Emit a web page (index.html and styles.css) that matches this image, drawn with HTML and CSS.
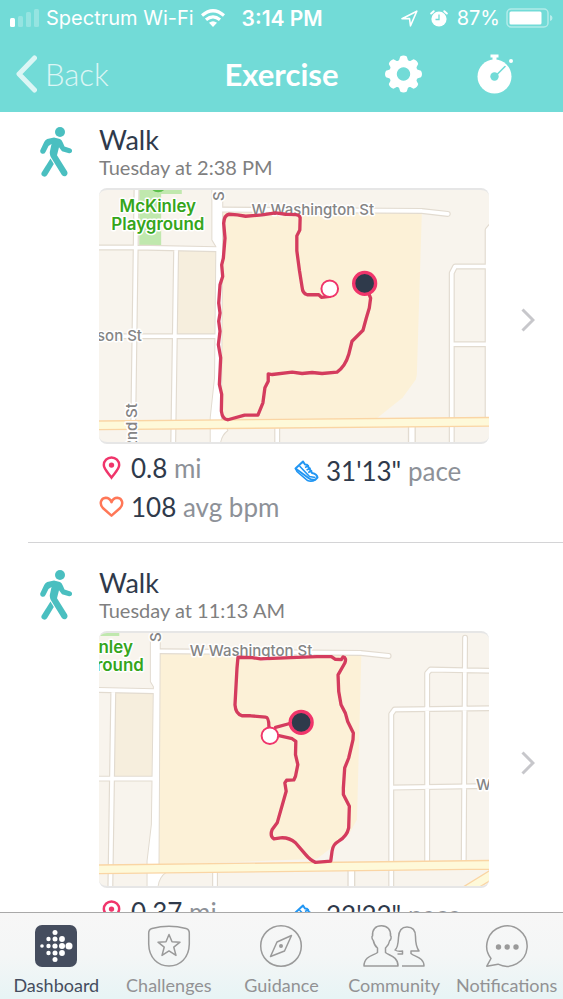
FILE: index.html
```
<!DOCTYPE html>
<html lang="en"><head>

<meta charset="utf-8" />
<meta name="viewport" content="width=device-width, initial-scale=1" />
<title>Exercise</title>

<link rel="stylesheet" href="styles.css">

</head><body>

<!-- shared icons -->
<svg class="defs" aria-hidden="true">
	<symbol id="walk" viewBox="0 0 32 50">
		<circle cx="20" cy="5" r="5" />
		<path d="M14 10.500l6 1.500q2 1 3 4l1.500 3.500 6 2q2 1 1.500 3t-3 1.700l-7-2-3-4-2 8 10 16q1.400 3-.8 4.500t-4.300-.7L12 32q-3-4-2-8l1.500-7-3 2-3 6q-1.200 2.400-3.500 1.700T.3 23.300L4.200 15q1-2 3-3z" />
		<path d="M10.500 31.500l3.300 5.500L7 48.300q-1.500 2.200-4 1t-1.300-3.800z" />
	</symbol>
	<symbol id="pin" viewBox="0 0 20 25">
		<path fill="none" stroke="#f0356b" stroke-width="2.600" d="M10 22.500C6 17 2 13.500 2 9.500a8 8 0 0 1 16 0C18 13.500 14 17 10 22.500z" />
		<circle cx="10" cy="9.500" r="2.800" fill="#f0356b" />
	</symbol>
	<symbol id="shoe" viewBox="0 0 25 23">
		<path fill="none" stroke="#2196f3" stroke-width="2" stroke-linejoin="round" d="M1.500 9L9 2l2 3 2 .2 5 8.300q5 1 5.500 4.500l-2 2q-4 .8-7-1.500z" />
		<path fill="none" stroke="#2196f3" stroke-width="1.600" d="M1.500 9L3 12l10.500 9q4 1.500 8-.8M5.500 6.500L15.500 17l6 1M11 8l4-2M12.600 10.500l4-2M14.200 13l4-2" />
	</symbol>
	<symbol id="heart" viewBox="0 0 26 23">
		<path fill="none" stroke="#ff7757" stroke-width="2.600" stroke-linejoin="round" d="M13 20.500L4 12.500C0 8 2 2.500 7 2q4 0 6 4.500Q15 2 19 2c5 .5 7 6 3 10.500z" />
	</symbol>
	<symbol id="more" viewBox="0 0 14 24">
		<path fill="none" stroke="#c7c7cb" stroke-width="3" d="M1.500 1.500L12 12 1.500 22.500" />
	</symbol>
</svg>

<header class="top">
	<div class="status">
		<svg class="bars" viewBox="0 0 29 18" fill="#fff">
			<rect y="9" width="5" height="9" rx="1.500" />
			<g opacity=".25">
				<rect x="8" y="7" width="5" height="11" rx="1.500" />
				<rect x="16" y="3" width="5" height="15" rx="1.500" />
				<rect x="24" width="5" height="18" rx="1.500" />
			</g>
		</svg>
		<span class="carrier">Spectrum Wi-Fi</span>
		<svg class="wifi" viewBox="0 0 24 18" fill="none" stroke="#fff" stroke-width="3.200">
			<path d="M1 6.500q11-9.500 22 0M5 10.800q7-6 14 0" />
			<path fill="#fff" stroke="none" d="M12 18l-4-4.200q4-3.200 8 0z" />
		</svg>
		<span class="time">3:14 PM</span>
		<svg class="arrow" viewBox="0 0 17 17" fill="none" stroke="#fff" stroke-width="1.600" stroke-linejoin="round">
			<path d="M1 8.800L15.800 1.200 9.500 15.800 8.500 8.500z" />
		</svg>
		<svg class="alarm" viewBox="0 0 18 17">
			<circle cx="9" cy="9" r="7.600" fill="#fff" />
			<path fill="none" stroke="#fff" stroke-width="2" stroke-linecap="round" d="M1.200 3.500l2.500-2.300M16.800 3.500l-2.500-2.300" />
			<path fill="none" stroke="#72dbd7" stroke-width="1.300" d="M9 4.500V9.500H5.500" />
		</svg>
		<span class="percent">87%</span>
		<svg class="battery" viewBox="0 0 47 20">
			<rect x="1" y="1" width="41" height="18" rx="4" fill="none" stroke="#fff" stroke-opacity=".45" stroke-width="1.500" />
			<rect x="3.500" y="3.500" width="32" height="13" rx="1.500" fill="#fff" />
			<path fill="#fff" fill-opacity=".5" d="M44 7q2.500.5 2.500 3T44 13z" />
		</svg>
	</div>
	<nav class="bar">
		<button type="button" class="back">
			<svg viewBox="0 0 21 38"><path fill="none" stroke="#fff" stroke-width="5" stroke-linecap="round" stroke-linejoin="round" d="M18.500 3L3 19l15.500 16" /></svg>
			Back
		</button>
		<h1>Exercise</h1>
		<div class="actions">
			<button type="button" aria-label="Settings">
				<svg viewBox="-18.500 -18.500 37 37" fill="#fff">
					<path id="teeth" d="M-3.300-17.500q3.300-2 6.600 0L5-12H-5zM-3.300 17.500q3.300 2 6.600 0L5 12H-5zM-17.500-3.300q-2 3.300 0 6.600L-12 5V-5zM17.500-3.300q2 3.300 0 6.600L12 5V-5z" />
					<use href="#teeth" transform="rotate(45)" />
					<path fill-rule="evenodd" d="M0-14.500a14.500 14.500 0 1 0 .01 0zM0-6.700a6.700 6.700 0 1 1-.01 0z" />
				</svg>
			</button>
			<button type="button" aria-label="Start timer">
				<svg viewBox="0 0 37 40">
					<circle cx="17.500" cy="22.500" r="17" fill="#fff" />
					<path fill="#fff" d="M13.500.5h8v3h-2V7h-4V3.500h-2z" />
					<circle cx="34" cy="7" r="2" fill="#fff" />
					<path fill="none" stroke="#72dbd7" stroke-width="1.600" stroke-linecap="round" d="M18 22.500l10-10" />
					<circle cx="17.500" cy="22.500" r="4.200" fill="#72dbd7" />
				</svg>
			</button>
		</div>
	</nav>
</header>

<main class="list">
	<a class="entry" href="#walk-1">
		<svg class="kind"><use href="#walk" /></svg>
		<div class="body">
			<h2>Walk</h2>
			<p class="when">Tuesday at 2:38 PM</p>
			<svg class="map" viewBox="0 2 391 253">
				<g transform="translate(-3 -3) scale(.33333)">
					<path class="park" d="M130 0H258V27H196V183H130z" />
					<circle cx="187" cy="-4" r="26" fill="#5cc14c" />
					<path class="block" d="M245 195H362V455H245z" />
					<path class="campus" d="M378 82L980 84 965 570 962 585 922 640 840 705 378 715z" />
					<g class="casing">
						<path d="M122 0L112 715 110 790M241 195L232 790M0 188L120 188 362 193M0 455H362M1070 790V265L1080 245H1200M1178 715V135L1195 115M1070 479L1200 478M380 74L980 78 1058 87M545 730V790" />
						<path class="wide" d="M950 718V790" />
						<path class="shape" d="M350 0V165L362 185 358 580 345 700V790H372Q372 755 395 738L376 710 380 0z" />
					</g>
					<g class="road">
						<path d="M122 0L112 715 110 790M241 195L232 790M0 188L120 188 362 193M0 455H362M1070 790V265L1080 245H1200M1178 715V135L1195 115M1070 479L1200 478M380 74L980 78 1058 87M545 730V790" />
						<path class="wide" d="M950 718V790" />
						<path class="shape" d="M350 0V165L362 185 358 580 345 700V790H372Q372 755 395 738L376 710 380 0z" />
					</g>
					<path class="main-casing" d="M0 723L1200 712" />
					<path class="main-road" d="M0 723L1200 712" />
				</g>
				<g class="street">
					<text x="153" y="27">W Washington St</text>
					<text x="43" y="153" text-anchor="end">son St</text>
					<text transform="translate(38 262) rotate(-90)">2nd St</text>
					<text transform="translate(125 13) rotate(-90)">S</text>
				</g>
				<g class="place">
					<text x="59" y="24" text-anchor="middle">McKinley</text>
					<text x="59" y="42" text-anchor="middle">Playground</text>
				</g>
				<g transform="translate(-3 -3) scale(.33333)">
					<path class="route" d="M703 335L678 338 670 330H635Q621 326 620 308L612 258 604 198V153L613 135 614 98Q612 90 600 89L570 88 540 84 500 90 450 94 425 90 400 88Q386 90 384 115L388 160 383 220 378 240 381 275 373 300 369 355 373 385 369 410 373 440 368 480 375 520 371 600 378 630 377 680Q380 705 397 706L447 692H487L502 655 508 610 518 590V568L530 570 590 563 620 567 650 564 680 567 725 563Q750 545 760 510L770 470 803 437 813 400 822 370 826 340 808 296" />
					<circle class="start" cx="703" cy="312" r="25" />
					<circle class="finish" cx="808" cy="296" r="33" />
				</g>
			</svg>
			<ul class="stats">
				<li><svg><use href="#pin" /></svg><span><b>0.8</b> mi</span></li>
				<li class="pace"><svg><use href="#shoe" /></svg><span><b>31'13"</b> pace</span></li>
				<li><svg><use href="#heart" /></svg><span><b>108</b> avg bpm</span></li>
			</ul>
		</div>
		<svg class="more"><use href="#more" /></svg>
	</a>

	<a class="entry" href="#walk-2">
		<svg class="kind"><use href="#walk" /></svg>
		<div class="body">
			<h2>Walk</h2>
			<p class="when">Tuesday at 11:13 AM</p>
			<svg class="map" viewBox="0 2 391 253">
				<g transform="translate(-3 -6) scale(.33333)">
					<path class="park" d="M0 0H70V33H0z" />
					<path class="block" d="M55 200H174V460H55z" />
					<path class="campus" d="M188 86L798 90 785 585 760 630 665 703 188 722z" />
					<g class="casing">
						<path d="M52 200L43 800M0 195L175 199M0 462H175M888 800V268L898 254 1200 250M996 715V145L1006 134 1200 138M1106 715L1110 38M888 489L1200 484M190 79L797 84 880 93M358 740V800" />
						<path class="wide" d="M768 730V800" />
						<path class="shape" d="M165 0V170L174 185 168 600 155 710V800H184Q185 760 210 743L188 720 192 0z" />
					</g>
					<g class="road">
						<path d="M52 200L43 800M0 195L175 199M0 462H175M888 800V268L898 254 1200 250M996 715V145L1006 134 1200 138M1106 715L1110 38M888 489L1200 484M190 79L797 84 880 93M358 740V800" />
						<path class="wide" d="M768 730V800" />
						<path class="shape" d="M165 0V170L174 185 168 600 155 710V800H184Q185 760 210 743L188 720 192 0z" />
					</g>
					<path class="main-casing" d="M0 735L1200 721M1090 812L1210 738" />
					<path class="main-road" d="M0 735L1200 721M1090 812L1210 738" />
				</g>
				<g class="street">
					<text x="91" y="25">W Washington St</text>
					<text x="378" y="159">W</text>
					<text transform="translate(62 11) rotate(-90)">S</text>
				</g>
				<g class="place">
					<text x="34" y="22" text-anchor="end">McKinley</text>
					<text x="45" y="40" text-anchor="end">Playground</text>
				</g>
				<g transform="translate(-3 -6) scale(.33333)">
					<path class="route" d="M617 293L580 297 540 308M523 333L520 305Q520 278 510 277L465 273H440Q420 268 418 240L424 130 427 97 470 98 495 102 585 98 665 95H708L720 103 738 104 743 96Q755 98 748 115L728 150 730 200 737 240 750 265 757 290 774 325 773 345 760 400 748 430 744 490V510L762 545 760 610Q755 635 730 650 712 660 710 680L706 710 660 714Q645 708 630 690L600 655Q580 638 555 640L535 643Q522 635 530 615L545 595 572 500 568 475 573 467 595 466 600 455 607 420 600 390 601 350 590 342 550 333" />
					<circle class="start" cx="523" cy="333" r="25" />
					<circle class="finish" cx="617" cy="293" r="33" />
				</g>
			</svg>
			<ul class="stats">
				<li><svg><use href="#pin" /></svg><span><b>0.37</b> mi</span></li>
				<li class="pace"><svg><use href="#shoe" /></svg><span><b>22'22"</b> pace</span></li>
			</ul>
		</div>
		<svg class="more"><use href="#more" /></svg>
	</a>
</main>

<nav class="tabs">
	<a class="current" href="#dashboard">
		<svg viewBox="0 0 42 42">
			<rect width="42" height="42" rx="7" fill="#454d5e" />
			<g fill="#fff">
				<circle cx="7" cy="21" r="1.800" />
				<circle cx="13.500" cy="14" r="2.200" /><circle cx="13.500" cy="21" r="2.200" /><circle cx="13.500" cy="28" r="2.200" />
				<circle cx="20" cy="7.500" r="2.500" /><circle cx="20" cy="14" r="2.500" /><circle cx="20" cy="21" r="2.600" /><circle cx="20" cy="28" r="2.500" /><circle cx="20" cy="34.500" r="2.500" />
				<circle cx="27" cy="14" r="2.900" /><circle cx="27" cy="21" r="3" /><circle cx="27" cy="28" r="2.900" />
				<circle cx="34" cy="21" r="3.500" />
			</g>
		</svg>
		Dashboard
	</a>
	<a href="#challenges">
		<svg viewBox="0 0 42 42">
			<path d="M4 3.500Q21-.8 38 3.500 41.500 4.500 41.300 8.500V19C41 33 32 41 21 41S1 33 .7 19V8.500Q.5 4.500 4 3.500z" />
			<path d="M21 9.500l3 7.300 8 .4-6.200 5 2.200 8.200-7-4.500-7 4.500 2.200-8.200-6.200-5 8-.4z" />
		</svg>
		Challenges
	</a>
	<a href="#guidance">
		<svg viewBox="0 0 42 42">
			<circle cx="21" cy="21" r="20.300" />
			<path d="M31.500 10.500L24.500 26 10.500 31.500 17 17z" />
			<circle class="dot" cx="21" cy="21" r="2" />
		</svg>
		Guidance
	</a>
	<a href="#community">
		<svg class="people" viewBox="0 0 62 42">
			<path d="M18.500.8c6 0 9.500 4 9 10 1.200.5.600 4-.8 4.700-.6 4-2 5.500-4.200 7.500V27.500c3 3 12.500 3.500 12.500 13.500H1c0-10 10-10.500 13.500-13.500V23c-2.500-2-3.500-3.500-4.200-7.500C9 14.500 8.400 11.300 9.600 10.800 9 4.500 12.500.8 18.500.8z" />
			<path d="M39 41H61c0-9-9.500-9-13-12.500V26h8q-3.500-5-3.500-14.500T44 2q-8 0-8.500 10.500T32 25q3 2 7.500 1v3h-5" />
		</svg>
		Community
	</a>
	<a href="#notifications">
		<svg viewBox="0 0 42 42">
			<path d="M5 33.500A20.200 20.200 0 1 1 12 39.200L.8 41.200z" />
			<g class="dot"><circle cx="12.500" cy="22" r="2.700" /><circle cx="21.200" cy="22" r="2.700" /><circle cx="30" cy="22" r="2.700" /></g>
		</svg>
		Notifications
	</a>
</nav>

</body></html>
```
FILE: styles.css
```
:root {
	--teal      : #72dbd7;
	--walk      : #4abfc0;
	--ink       : #2f3a4b;
	--grey      : #8d9198;
	--line      : #d4d4d6;
}
* {
	box-sizing : border-box;
}
body {
	display        : flex;
	flex-direction : column;
	height         : 100vh;
	margin         : 0;
	background     : #fff;
	color          : var(--ink);
	font-family    : Lato, sans-serif;
}
a {
	color           : inherit;
	text-decoration : none;
}
button {
	padding    : 0;
	border     : 0;
	background : none;
	color      : inherit;
	font       : inherit;
}
button svg {
	display : block;
}
.defs {
	position : absolute;
	width    : 0;
	height   : 0;
}

/* header */
.top {
	flex-shrink : 0;
	background  : var(--teal);
	color       : #fff;
}
.status {
	display     : flex;
	align-items : center;
	height      : 36px;
	padding     : 0 10px;
	font-family : Inter, sans-serif;
	font-size   : 20px;
}
.bars    { width : 29px; height : 18px; margin-right : 7px; }
.wifi    { width : 24px; height : 18px; margin-left : 7px; }
.arrow   { width : 17px; height : 17px; margin-left : auto; }
.alarm   { width : 18px; height : 17px; margin-left : 12px; }
.battery { width : 47px; height : 20px; margin-left : 6px; }
.time {
	margin-left : 17px;
	font-size   : 21px;
	font-weight : 600;
}
.percent {
	margin-left : 9px;
}
.bar {
	display               : grid;
	grid-template-columns : 1fr auto 1fr;
	align-items           : center;
	height                : 76px;
	padding               : 0 16px;
}
.back {
	display      : flex;
	align-items  : center;
	gap          : 8px;
	justify-self : start;
	font-size    : 31px;
	font-weight  : 300;
	line-height  : 38px;
	opacity      : .75;
}
.back svg {
	width  : 21px;
	height : 38px;
}
.bar h1 {
	margin      : 0;
	font-size   : 31px;
	font-weight : 700;
	line-height : 38px;
}
.actions {
	display      : flex;
	align-items  : center;
	gap          : 55px;
	padding-left : 47px;
}
.actions svg {
	width  : 37px;
	height : 40px;
}

/* exercise list */
.list {
	flex       : 1;
	min-height : 0;
	overflow   : hidden;
}
.entry {
	display       : flex;
	margin-left   : 28px;
	padding       : 24px 28px 17px 12px;
	border-bottom : 1px solid var(--line);
}
.entry:first-child {
	padding-top : 12px;
}
.kind {
	flex-shrink : 0;
	width       : 32px;
	height      : 50px;
	margin      : 3px 27px 0 0;
	fill        : var(--walk);
}
.body {
	flex      : 1;
	min-width : 0;
}
.body h2 {
	margin      : 0;
	font-size   : 27px;
	font-weight : 400;
	line-height : 31px;
}
.when {
	margin      : 0 0 9px;
	color       : #808080;
	font-size   : 20px;
	line-height : 24px;
}
.more {
	flex-shrink : 0;
	width       : 14px;
	height      : 24px;
	margin      : 184px 0 0 32px;
}

/* map */
.map {
	display       : block;
	width         : 100%;
	border-top    : 2px solid #e6e6e6;
	border-bottom : 2px solid #e6e6e6;
	border-radius : 8px;
	background    : #f8f4ed;
}
.park   { fill : #c0e8ae; }
.block  { fill : #f6eedd; }
.campus { fill : #fcf1d7; }
.casing {
	fill            : none;
	stroke          : #e2dbd0;
	stroke-width    : 18;
	stroke-linecap  : round;
	stroke-linejoin : round;
}
.casing .wide  { stroke-width : 24; }
.casing .shape { stroke-width : 6; }
.road {
	fill            : none;
	stroke          : #fff;
	stroke-width    : 11;
	stroke-linecap  : round;
	stroke-linejoin : round;
}
.road .wide  { stroke-width : 16; }
.road .shape { fill : #fff; stroke : none; }
.main-casing { fill : none; stroke : #fad5a4; stroke-width : 30; }
.main-road   { fill : none; stroke : #fef9d9; stroke-width : 22; }
.map text {
	font-family     : Inter, sans-serif;
	paint-order     : stroke;
	stroke          : #fff;
	stroke-width    : 3px;
	stroke-linejoin : round;
}
.street {
	fill        : #858585;
	font-size   : 15px;
	font-weight : 500;
}
.place {
	fill        : #35a51b;
	font-size   : 17px;
	font-weight : 600;
}
.route {
	fill            : none;
	stroke          : #d43c5e;
	stroke-width    : 10;
	stroke-linecap  : round;
	stroke-linejoin : round;
}
.start  { fill : #fff; stroke : #f0356b; stroke-width : 6; }
.finish { fill : #2f3a4b; stroke : #f0356b; stroke-width : 10; }

/* distance, pace, pulse */
.stats {
	display               : grid;
	grid-template-columns : 1fr 1fr;
	margin                : 3px 0 0;
	padding               : 0;
	color                 : var(--grey);
	font-size             : 26px;
	line-height           : 36px;
	list-style            : none;
	white-space           : nowrap;
}
.stats li {
	display     : flex;
	align-items : center;
	gap         : 7px;
}
.stats svg {
	width  : 25px;
	height : 24px;
}
.stats b {
	color       : var(--ink);
	font-weight : 400;
}
.stats .pace {
	padding-top : 6px;
}

/* tab bar */
.tabs {
	display               : grid;
	grid-template-columns : repeat(5, 1fr);
	flex-shrink           : 0;
	height                : 87px;
	padding-top           : 12px;
	border-top            : 1px solid #a9a9a9;
	background            : linear-gradient(#f7f7f7, #f4f6f6 50%, #e7f4f5);
	color                 : #929294;
	font-size             : 18px;
	line-height           : 24px;
}
.tabs a {
	display        : flex;
	flex-direction : column;
	align-items    : center;
	gap            : 6px;
}
.tabs .current {
	color : #454d5e;
}
.tabs svg {
	width           : 42px;
	height          : 42px;
	overflow        : visible;
	fill            : none;
	stroke          : #9a9a9a;
	stroke-width    : 1.5px;
	stroke-linejoin : round;
}
.tabs .current svg {
	stroke : none;
}
.tabs .people {
	width : 62px;
}
.tabs .dot {
	fill   : #9a9a9a;
	stroke : none;
}
```
